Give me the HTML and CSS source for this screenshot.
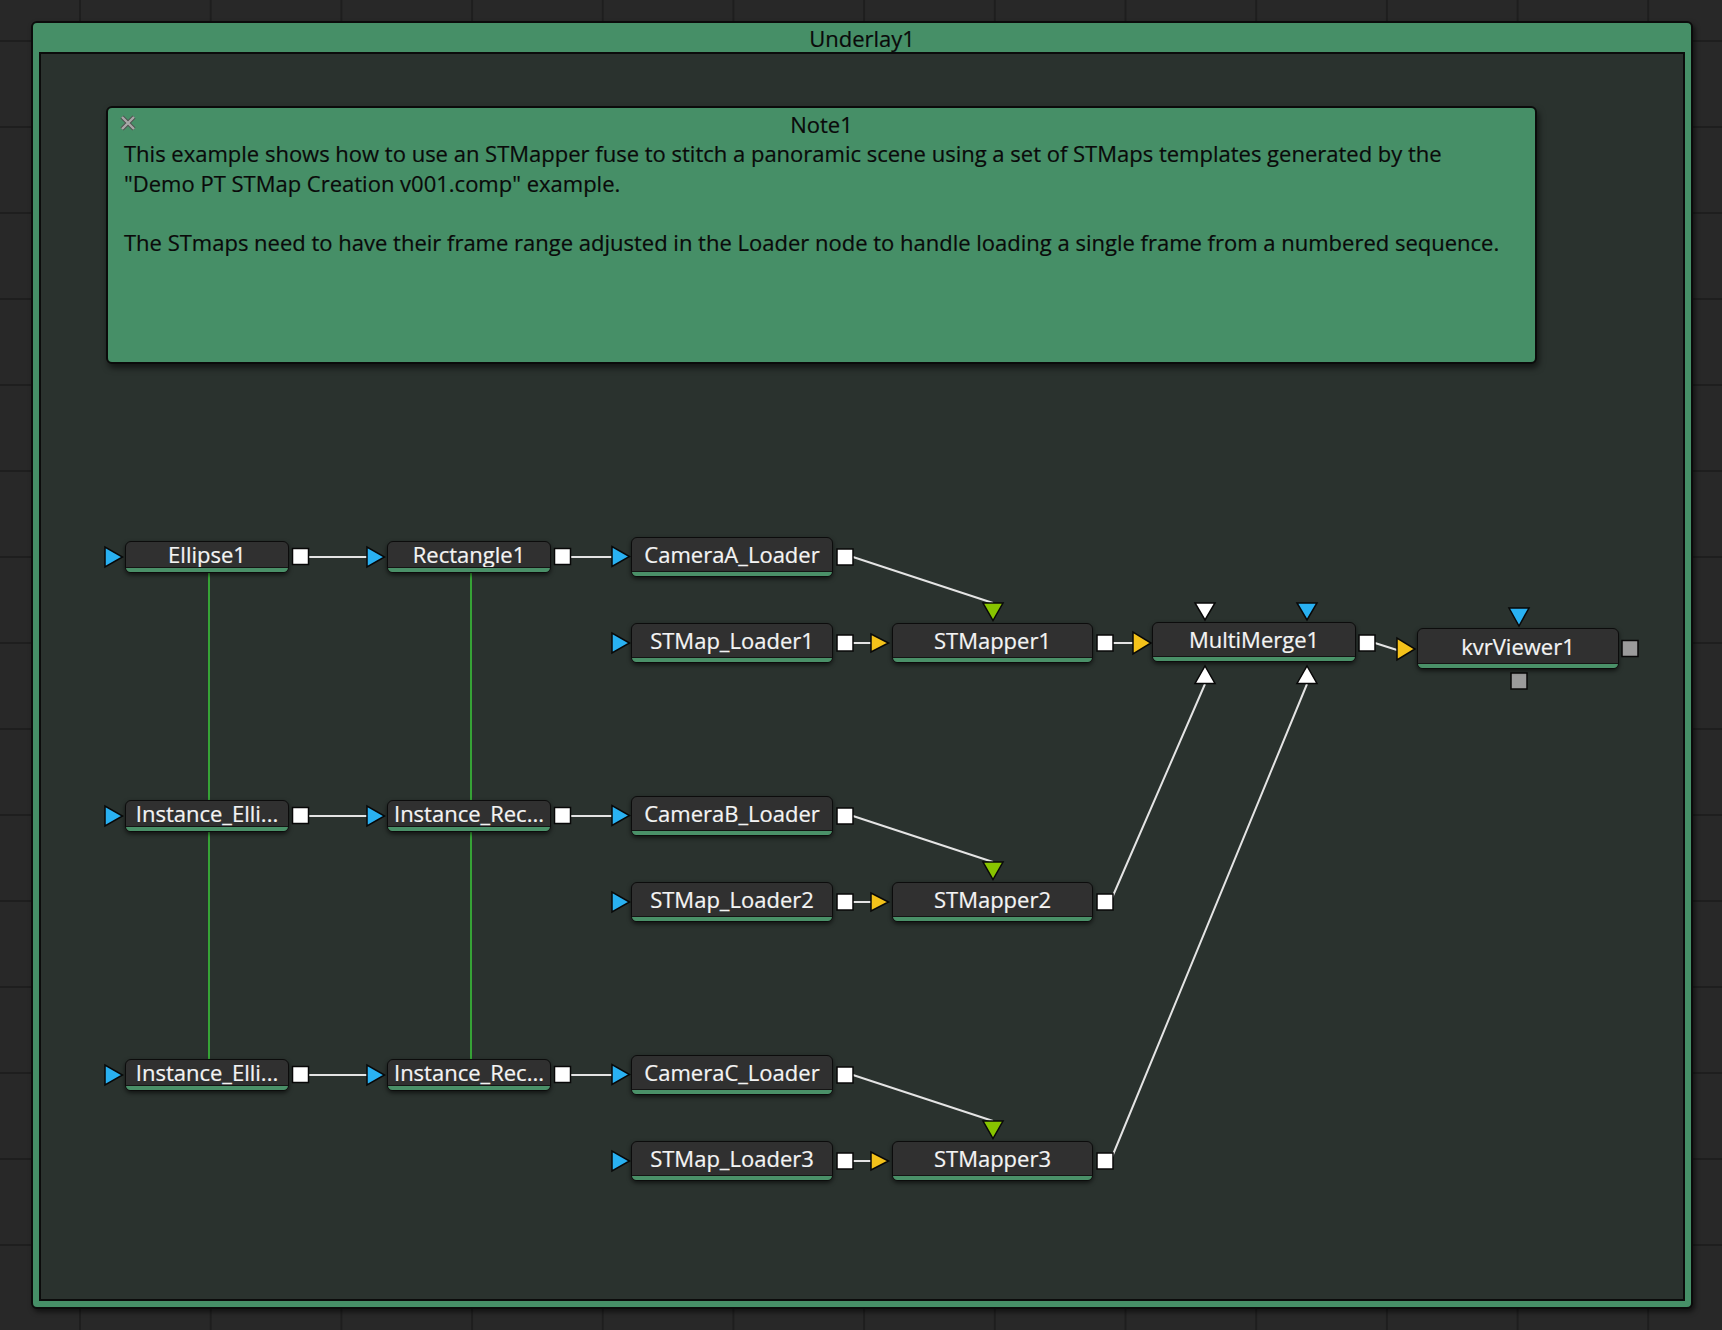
FILE: index.html
```html
<!DOCTYPE html>
<html>
<head>
<meta charset="utf-8">
<link rel="stylesheet" href="styles.css">
</head>
<body>
<div class="underlay">
  <div class="underlay-title">Underlay1</div>
  <div class="underlay-body">
    <div class="note">
      <svg class="note-close" width="18" height="18" viewBox="0 0 18 18"><path d="M3 3 L15 15 M15 3 L3 15" stroke="#4f4f4f" stroke-width="4.2" fill="none"/><path d="M3 3 L15 15 M15 3 L3 15" stroke="#a8a8a8" stroke-width="2.4" fill="none"/></svg>
      <div class="note-title">Note1</div>
      <div class="note-text">
        <p>This example shows how to use an STMapper fuse to stitch a panoramic scene using a set of STMaps templates generated by the<br>"Demo PT STMap Creation v001.comp" example.</p>
        <p>The STmaps need to have their frame range adjusted in the Loader node to handle loading a single frame from a numbered sequence.</p>
      </div>
    </div>

    <svg class="wires" width="1642" height="1245" viewBox="41 54 1642 1245">
      <defs>
        <g id="row">
          <path d="M309 557 H367 M571 557 H613 M853 557 L993 603 M853 643 H871" class="wire"/>
          <polygon points="105,547 105,567 122.5,557" class="p-blue"/>
          <rect x="292.5" y="548.5" width="16" height="16" class="p-out"/>
          <polygon points="367,547 367,567 384.5,557" class="p-blue"/>
          <rect x="554.5" y="548.5" width="16" height="16" class="p-out"/>
          <polygon points="612,546.5 612,566.5 629.5,556.5" class="p-blue"/>
          <rect x="837" y="549" width="16" height="16" class="p-out"/>
          <polygon points="612,633 612,653 629.5,643" class="p-blue"/>
          <rect x="837" y="635" width="16" height="16" class="p-out"/>
          <polygon points="871,634 871,652 888.5,643" class="p-yellow"/>
          <polygon points="983,603 1003,603 993,620.5" class="p-green"/>
          <rect x="1097" y="635" width="16" height="16" class="p-out"/>
        </g>
      </defs>
      <path d="M209 560 V1070 M471 560 V1070" class="inst"/>
      <path d="M1113 643 H1133 M1112 898 L1205 684 M1112 1157 L1307 684 M1375 643 L1397 650" class="wire"/>
      <use href="#row"/>
      <use href="#row" y="259"/>
      <use href="#row" y="518"/>
      <polygon points="1133,632 1133,654 1151,643" class="p-yellow"/>
      <polygon points="1195,603 1215,603 1205,620" class="p-white"/>
      <polygon points="1297,603 1317,603 1307,620" class="p-blue"/>
      <polygon points="1195,683.5 1215,683.5 1205,666" class="p-white"/>
      <polygon points="1297,683.5 1317,683.5 1307,666" class="p-white"/>
      <rect x="1359" y="635" width="16" height="16" class="p-out"/>
      <polygon points="1397,638 1397,660 1415,649" class="p-yellow"/>
      <polygon points="1509,608 1529,608 1519,626" class="p-blue"/>
      <rect x="1622" y="640.5" width="16" height="16" class="p-gray"/>
      <rect x="1511" y="673" width="16" height="16" class="p-gray"/>
    </svg>

    <div class="row row-1">
      <div class="node n-ell"><span class="label">Ellipse1</span><span class="stripe"></span></div>
      <div class="node n-rect"><span class="label">Rectangle1</span><span class="stripe"></span></div>
      <div class="node n-cam"><span class="label">CameraA_Loader</span><span class="stripe"></span></div>
      <div class="node n-stl"><span class="label">STMap_Loader1</span><span class="stripe"></span></div>
      <div class="node n-stm"><span class="label">STMapper1</span><span class="stripe"></span></div>
    </div>
    <div class="row row-2">
      <div class="node n-ell"><span class="label">Instance_Elli...</span><span class="stripe"></span></div>
      <div class="node n-rect"><span class="label">Instance_Rec...</span><span class="stripe"></span></div>
      <div class="node n-cam"><span class="label">CameraB_Loader</span><span class="stripe"></span></div>
      <div class="node n-stl"><span class="label">STMap_Loader2</span><span class="stripe"></span></div>
      <div class="node n-stm"><span class="label">STMapper2</span><span class="stripe"></span></div>
    </div>
    <div class="row row-3">
      <div class="node n-ell"><span class="label">Instance_Elli...</span><span class="stripe"></span></div>
      <div class="node n-rect"><span class="label">Instance_Rec...</span><span class="stripe"></span></div>
      <div class="node n-cam"><span class="label">CameraC_Loader</span><span class="stripe"></span></div>
      <div class="node n-stl"><span class="label">STMap_Loader3</span><span class="stripe"></span></div>
      <div class="node n-stm"><span class="label">STMapper3</span><span class="stripe"></span></div>
    </div>
    <div class="node n-mm"><span class="label">MultiMerge1</span><span class="stripe"></span></div>
    <div class="node n-kvr"><span class="label">kvrViewer1</span><span class="stripe"></span></div>
  </div>
</div>
</body>
</html>
```
FILE: styles.css
```css
html, body {
  margin: 0;
  padding: 0;
}
body {
  width: 1722px;
  height: 1330px;
  overflow: hidden;
  background-color: #282828;
  background-image:
    linear-gradient(to right, #1e1e1e 2px, transparent 2px),
    linear-gradient(to bottom, #1e1e1e 2px, transparent 2px);
  background-size: 130.7px 86px;
  background-position: 79px 40px;
  font-family: "Open Sans", "Noto Sans", sans-serif;
}
.underlay {
  margin: 21px 0 0 31px;
  width: 1662px;
  height: 1288px;
  box-sizing: border-box;
  background: #468f67;
  border: 2px solid #0b0b0b;
  border-radius: 6px;
  padding: 0 6px 6px 6px;
  display: flex;
  flex-direction: column;
  box-shadow: 2px 3px 5px rgba(0, 0, 0, 0.55);
}
.underlay-title {
  height: 29px;
  line-height: 31px;
  text-align: center;
  font-size: 22px;
  color: #0a0a0a;
  -webkit-text-stroke: 0.2px #0a0a0a;
}
.underlay-body {
  flex: 1;
  position: relative;
  background: #2a322e;
  border: 2px solid #0b0b0b;
}
.note {
  position: relative;
  margin: 52px 0 0 65px;
  width: 1431px;
  height: 258px;
  box-sizing: border-box;
  background: #468f67;
  border: 2px solid #0b0b0b;
  border-radius: 6px;
  padding-top: 2px;
  color: #0a0a0a;
  font-size: 22px;
  -webkit-text-stroke: 0.2px #0a0a0a;
  box-shadow: 2px 4px 6px rgba(0, 0, 0, 0.55);
}
.note-close {
  position: absolute;
  left: 11px;
  top: 6px;
}
.note-title {
  line-height: 29px;
  text-align: center;
}
.note-text {
  padding: 0 16px;
  line-height: 29.7px;
  white-space: nowrap;
}
.note-text p {
  margin: 0 0 29.7px 0;
}
.wires {
  position: absolute;
  left: 0;
  top: 0;
}
.wire {
  stroke: #e4e4e4;
  stroke-width: 2;
  fill: none;
}
.inst {
  stroke: #36a336;
  stroke-width: 2;
  fill: none;
}
.p-blue { fill: #29b1f2; stroke: #080808; stroke-width: 1.5; }
.p-yellow { fill: #f4c21a; stroke: #080808; stroke-width: 1.5; }
.p-green { fill: #88c400; stroke: #080808; stroke-width: 1.5; }
.p-white { fill: #ffffff; stroke: #080808; stroke-width: 1.5; }
.p-out { fill: #ffffff; stroke: #080808; stroke-width: 1.5; }
.p-gray { fill: #9b9b9b; stroke: #080808; stroke-width: 1.5; }

.row {
  position: absolute;
  left: 0;
  top: 0;
  width: 100%;
  height: 0;
}
.row-2 { top: 259px; }
.row-3 { top: 518px; }

.node {
  position: absolute;
  box-sizing: border-box;
  display: flex;
  flex-direction: column;
  background: #303030;
  border: 1.5px solid #0c0c0c;
  border-radius: 6px;
  color: #f4f4f4;
  font-size: 22px;
  -webkit-text-stroke: 0.2px #f4f4f4;
  box-shadow: 0 2px 4px rgba(0, 0, 0, 0.6);
}
.label {
  flex: 1;
  display: flex;
  align-items: center;
  justify-content: center;
  white-space: nowrap;
  line-height: 22px;
  padding-bottom: 1px;
}
.stripe {
  height: 4px;
  background: #4a9068;
  border-top: 1px solid #151515;
  border-radius: 0 0 4.5px 4.5px;
}
.n-ell { left: 84px; top: 487px; width: 164px; height: 32px; }
.n-rect { left: 346px; top: 487px; width: 164px; height: 32px; }
.n-cam { left: 590px; top: 483px; width: 202px; height: 40px; }
.n-stl { left: 590px; top: 569px; width: 202px; height: 40px; }
.n-stm { left: 851px; top: 569px; width: 201px; height: 40px; }
.n-mm { left: 1111px; top: 568px; width: 204px; height: 40px; }
.n-kvr { left: 1376px; top: 574px; width: 202px; height: 41px; }
```
